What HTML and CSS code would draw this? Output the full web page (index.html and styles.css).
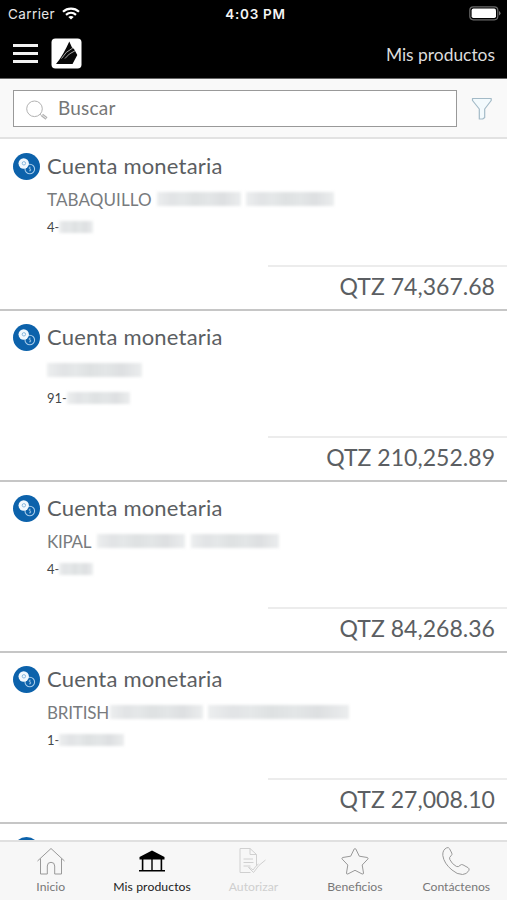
FILE: index.html
```html
<!DOCTYPE html>
<html lang="es">
<head>
<meta charset="utf-8">
<title>Mis productos</title>
<link rel="stylesheet" href="styles.css">
</head>
<body>
<svg class="defs" width="0" height="0" aria-hidden="true">
  <symbol id="coins" viewBox="0 0 27 27">
    <circle cx="13.5" cy="13.5" r="13.5" fill="#0c62ab"/>
    <circle cx="16.8" cy="16" r="4.800" fill="#0c62ab" stroke="#a9cdea" stroke-width="1.100"/>
    <path d="M17.600 14.200h-1.300v1.700h1.300v1.900h-1.600" fill="none" stroke="#a9cdea" stroke-width=".8"/>
    <circle cx="10.700" cy="10.500" r="5.200" fill="#f2f8fd"/>
    <circle cx="10.900" cy="10.300" r="1.700" fill="none" stroke="#7fb2da" stroke-width=".9"/>
  </symbol>
</svg>
<div class="app">
  <header class="top">
    <div class="status">
      <div class="carrier"><span>Carrier</span>
        <svg width="18" height="13" viewBox="0 0 18 13" fill="none" stroke="#fff" stroke-width="2.2"><path d="M1 4.800C5.500.6 12.500.6 17 4.800M4 7.900c2.900-2.600 7.100-2.600 10 0"/><path d="M6.300 9.900 9 12.600l2.700-2.700c-1.500-1.300-3.900-1.300-5.400 0z" fill="#fff" stroke="none"/></svg>
      </div>
      <span class="time">4:03 PM</span>
      <svg class="battery" width="32" height="15" viewBox="0 0 32 15"><rect x=".8" y=".8" width="28" height="13" rx="3.500" fill="none" stroke="#6a6a6a" stroke-width="1.200"/><rect x="2.600" y="2.600" width="24.400" height="9.400" rx="1.800" fill="#fff"/><path d="M30 5v4.600q1.500-.8 1.500-2.300T30 5z" fill="#777"/></svg>
    </div>
    <div class="nav">
      <div class="left">
        <div class="burger"><i></i><i></i><i></i></div>
        <svg width="31" height="31" viewBox="0 0 31 31"><rect x=".5" y=".5" width="30" height="30" rx="4" fill="#fff"/><path d="M5 26C10 20 14.500 12 18.300 3.500L21 9.500l2 1.500 3.300 6L21.500 26z" fill="#080808"/><path d="M10.500 20.500Q14.500 13.500 21.800 10M14 20.500Q17.500 15.500 24 12.800" fill="none" stroke="#bbb" stroke-width=".9"/></svg>
      </div>
      <h1>Mis productos</h1>
    </div>
  </header>
  <div class="search">
    <div class="field">
      <svg width="22" height="20" viewBox="0 0 22 20" fill="none" stroke="#b2b2b2"><circle cx="8.500" cy="8.800" r="7.800"/><path d="M14 14.300l1.600 1.200"/><path d="M16 15l4.500 3.500" stroke-width="3.200"/><path d="M16.300 15.200l3.900 3" stroke="#eee"/></svg>
      <span>Buscar</span>
    </div>
    <svg class="funnel" width="22" height="24" viewBox="0 0 22 24"><path d="M1.500 1.500h18.700v2l-6.500 8.500v8.500l-2 1.500H8.300V12L1.500 3.500z" fill="#f3fafd" stroke="#a3bac7" stroke-width="1.200" stroke-linejoin="round"/></svg>
  </div>
  <main class="list">
    <article class="account">
      <div class="heading"><svg width="27" height="27"><use href="#coins"/></svg><h2>Cuenta monetaria</h2></div>
      <div class="owner"><span>TABAQUILLO</span><b class="mask w84"></b><b class="mask w88"></b></div>
      <div class="number"><span>4-</span><b class="mask w34"></b></div>
      <div class="amount"><span>QTZ 74,367.68</span></div>
    </article>
    <article class="account">
      <div class="heading"><svg width="27" height="27"><use href="#coins"/></svg><h2>Cuenta monetaria</h2></div>
      <div class="owner"><b class="mask w95"></b></div>
      <div class="number"><span>91-</span><b class="mask w63"></b></div>
      <div class="amount"><span>QTZ 210,252.89</span></div>
    </article>
    <article class="account">
      <div class="heading"><svg width="27" height="27"><use href="#coins"/></svg><h2>Cuenta monetaria</h2></div>
      <div class="owner tight"><span>KIPAL</span><b class="mask w88"></b><b class="mask w88"></b></div>
      <div class="number"><span>4-</span><b class="mask w34"></b></div>
      <div class="amount"><span>QTZ 84,268.36</span></div>
    </article>
    <article class="account">
      <div class="heading"><svg width="27" height="27"><use href="#coins"/></svg><h2>Cuenta monetaria</h2></div>
      <div class="owner close"><span>BRITISH</span><b class="mask w93"></b><b class="mask w140"></b></div>
      <div class="number"><span>1-</span><b class="mask w65"></b></div>
      <div class="amount"><span>QTZ 27,008.10</span></div>
    </article>
    <article class="account">
      <div class="heading"><svg width="27" height="27"><use href="#coins"/></svg></div>
    </article>
  </main>
  <footer class="tabs">
    <div class="tab"><svg width="30" height="30" viewBox="0 0 30 30" fill="none" stroke="#999"><path d="M1.500 15 15 2.500 28.500 15M4.500 12.500V28h6.800v-8q0-3.700 3.700-3.700t3.700 3.700v8h6.800V12.500"/></svg><span>Inicio</span></div>
    <div class="tab active"><svg width="30" height="30" viewBox="0 0 30 30"><path d="M15 4.500 27.500 11v2.500h-25V11zM2 24h26v1.600H2zM4.800 13h1.600v11H4.800zM14.300 13h1.400v11h-1.400zM23.600 13h1.600v11h-1.600z"/></svg><span>Mis productos</span></div>
    <div class="tab off"><svg width="30" height="30" viewBox="0 0 30 30" fill="none" stroke="#d0d0d0"><path d="M12.500 26.500H2V2.500h10l6.500 6v11.500M12 2.500V8.500h6.500M5.500 13H15M5.500 16.500h10M5.500 20h7M10.500 21.500l5 5q5-8 12-12.500M10.500 21.500q2 0 4.500 2.500 3-4.500 5.500-6"/></svg><span>Autorizar</span></div>
    <div class="tab"><svg width="30" height="30" viewBox="0 0 30 30" fill="none" stroke="#999" stroke-linejoin="round"><path d="M14.200 3q.8-1.200 1.600 0L19.300 10.200l8 1.300q1.400.5.500 1.600L22.200 19l1.300 8q0 1.400-1.300 1L15 24.300 7.800 28q-1.300.4-1.300-1l1.300-8-5.600-5.900q-.9-1.100.5-1.600l8-1.300z"/></svg><span>Beneficios</span></div>
    <div class="tab"><svg width="30" height="30" viewBox="0 0 30 30" fill="none" stroke="#999" stroke-linejoin="round"><path d="M5.700 1.800Q7.600 1 8.500 2.700l2.300 4.400q.7 1.600-.8 2.700-2.200 1.600-1.200 3.700 2.200 4.600 6.500 6.900 2.200 1 3.700-1 1.300-1.400 2.900-.6l5.200 2.900q1.600 1 .8 2.700-2 4-6.400 4.100-5.500 0-10.500-4.500Q3 17.500 1.800 9.500q-.4-5.700 3.900-7.700z"/></svg><span>Contáctenos</span></div>
  </footer>
</div>
</body>
</html>
```
FILE: styles.css
```css
* { box-sizing: border-box; }
body { margin: 0; background: #fff; font-family: Lato, "Liberation Sans", sans-serif; }
h1, h2 { margin: 0; font-weight: 400; }
svg { display: block; flex: none; }
.defs { position: absolute; }
.app { width: 507px; height: 900px; display: flex; flex-direction: column; overflow: hidden; }

.top { height: 79px; flex: none; background: #000; color: #fff; border-bottom: 1px solid #666; }
.status { height: 27px; display: grid; grid-template-columns: 1fr auto 1fr; align-items: center; padding: 0 6px 0 8px; font-family: Inter, sans-serif; font-size: 13.5px; }
.carrier { display: flex; align-items: center; gap: 7px; color: #e6e6e6; letter-spacing: .4px; }
.time { font-weight: 600; letter-spacing: .7px; color: #f4f4f4; padding-left: 2px; }
.battery { justify-self: end; }
.nav { height: 52px; display: flex; justify-content: space-between; align-items: center; padding: 0 12px 0 13px; }
.left { display: flex; align-items: center; gap: 13px; }
.burger { width: 25px; display: flex; flex-direction: column; gap: 5px; }
.burger i { height: 3px; background: #f2f2f2; }
.nav h1 { font-size: 17.4px; line-height: 24px; color: #dcdcdc; padding-top: 4px; }

.search { height: 60px; flex: none; display: flex; align-items: flex-start; background: #f9f9f9; border-bottom: 2px solid #e2e2e2; padding: 11px 14px 0 13px; justify-content: space-between; }
.field { width: 444px; height: 37px; border: 1px solid #999; background: #fff; display: flex; align-items: center; gap: 10px; padding-left: 12px; color: #777; font-size: 19px; letter-spacing: .2px; }
.field span { line-height: 24px; padding-bottom: 1px; }
.field svg { margin-top: 3px; }
.funnel { margin-top: 7px; }

.list { height: 701px; flex: none; overflow: hidden; padding-top: 1px; }
.account { height: 171px; border-bottom: 2px solid #c6c6c6; padding: 12px 0 0 13px; display: flex; flex-direction: column; }
.heading { display: flex; align-items: center; gap: 7px; height: 28px; }
.heading h2 { font-size: 22px; line-height: 28px; color: #5b5e62; letter-spacing: .2px; }
.owner { display: flex; align-items: center; height: 22px; margin: 8px 0 0 34px; font-size: 17px; color: #787b7e; letter-spacing: .1px; }
.number { display: flex; align-items: center; height: 18px; margin: 8px 0 0 34px; font-size: 13px; color: #44474a; }
.amount { width: 239px; margin: 29px 0 0 auto; border-top: 2px solid #ececec; padding: 5px 12px 0 0; display: flex; justify-content: flex-end; font-size: 23px; line-height: 28px; color: #5b5e62; letter-spacing: .03px; }
.mask { display: block; height: 14px; margin-left: 5px; filter: blur(1.5px); background: linear-gradient(90deg, #eceeef, #e1e3e5 18%, #e5e8e9 30%, #dee1e2 45%, #e3e6e7 62%, #dddfe1 78%, #ebedee); }
.tight span { letter-spacing: -.3px; }
.tight .mask { margin-left: 6px; }
.close span { letter-spacing: -.2px; }
.close span + .mask { margin-left: 1px; }
.number .mask { height: 12px; margin-left: 0; }
.w34 { width: 34px; }
.w63 { width: 63px; }
.w65 { width: 65px; }
.w84 { width: 84px; }
.w88 { width: 88px; }
.w93 { width: 93px; }
.w140 { width: 141px; }
.owner .w95 { width: 95px; margin-left: 0; }

.tabs { height: 60px; flex: none; background: #f7f7f7; border-top: 2px solid #e0e0e0; display: grid; grid-template-columns: repeat(5, 1fr); }
.tab { display: flex; flex-direction: column; align-items: center; padding-top: 4px; color: #777; font-size: 12.2px; line-height: 16px; gap: 3px; }
.tab.active { color: #222; letter-spacing: .1px; }
.tab.off { color: #cfcfcf; }
```
